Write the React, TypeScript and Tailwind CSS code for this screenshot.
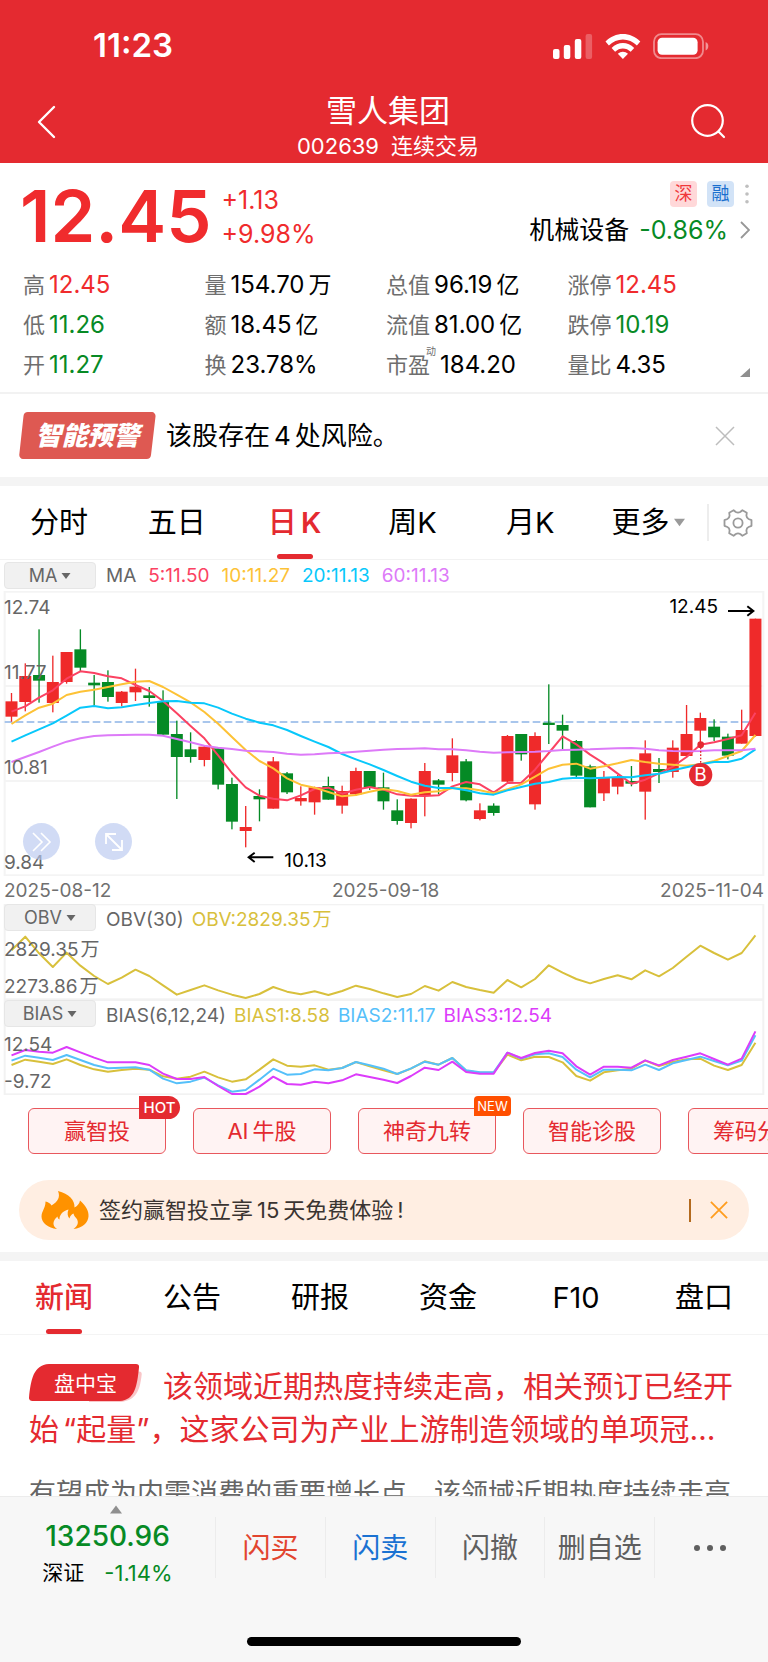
import { ReactNode } from "react";
import clsx from "clsx";

type Tone = "up" | "down" | "flat";

const toneClass: Record<Tone, string> = {
	up: "text-[#f02b2d]",
	down: "text-[#078a25]",
	flat: "text-black",
};

const stats: { label: string; value: string; unit?: string; sup?: string; tone: Tone }[] = [
	{ label: "高", value: "12.45", tone: "up" },
	{ label: "量", value: "154.70", unit: "万", tone: "flat" },
	{ label: "总值", value: "96.19", unit: "亿", tone: "flat" },
	{ label: "涨停", value: "12.45", tone: "up" },
	{ label: "低", value: "11.26", tone: "down" },
	{ label: "额", value: "18.45", unit: "亿", tone: "flat" },
	{ label: "流值", value: "81.00", unit: "亿", tone: "flat" },
	{ label: "跌停", value: "10.19", tone: "down" },
	{ label: "开", value: "11.27", tone: "down" },
	{ label: "换", value: "23.78%", tone: "flat" },
	{ label: "市盈", value: "184.20", sup: "动", tone: "flat" },
	{ label: "量比", value: "4.35", tone: "flat" },
];

// rising, high, body top, body bottom, low
const candles: [0 | 1, number, number, number, number][] = [
	[1, 336, 361, 407, 422], [1, 247, 285, 363, 391], [0, 145, 282, 299, 365], [1, 224, 303, 366, 394],
	[1, 213, 213, 303, 308], [0, 145, 205, 260, 272], [0, 282, 305, 313, 374], [0, 268, 303, 348, 362],
	[1, 330, 332, 366, 376], [1, 263, 317, 334, 360], [0, 318, 343, 351, 377], [0, 328, 361, 461, 465],
	[0, 419, 459, 528, 654], [0, 454, 505, 528, 545], [1, 492, 497, 537, 556], [0, 500, 502, 611, 625],
	[0, 590, 609, 722, 745], [1, 675, 738, 750, 799], [0, 625, 645, 655, 721], [1, 528, 541, 683, 683],
	[0, 573, 577, 634, 639], [1, 616, 651, 661, 674], [1, 617, 619, 664, 701], [0, 587, 615, 656, 656],
	[1, 614, 630, 674, 698], [1, 560, 570, 640, 645], [0, 570, 570, 619, 627], [0, 575, 619, 661, 686],
	[0, 655, 688, 720, 731], [1, 652, 653, 726, 742], [1, 546, 570, 642, 706], [0, 594, 598, 611, 640],
	[1, 472, 523, 576, 601], [0, 534, 541, 658, 661], [1, 667, 688, 714, 718], [0, 667, 674, 696, 704],
	[1, 462, 465, 602, 605], [0, 459, 459, 520, 539], [1, 454, 465, 670, 686], [0, 310, 425, 432, 489],
	[0, 401, 432, 449, 507], [0, 477, 480, 584, 588], [0, 551, 556, 679, 679], [1, 570, 590, 637, 660],
	[1, 582, 590, 617, 640], [0, 555, 600, 608, 616], [1, 478, 517, 632, 716], [0, 531, 564, 573, 606],
	[1, 478, 500, 573, 590], [1, 372, 459, 525, 527], [1, 395, 411, 449, 490], [0, 415, 437, 469, 480],
	[0, 458, 467, 524, 535], [1, 386, 447, 488, 488], [1, 113, 113, 465, 467],
];

const ma5 = [392, 376, 350, 328, 293, 271, 276, 286, 292, 312, 330, 360, 397, 435, 472, 523, 576, 619, 644, 653, 658, 643, 624, 620, 638, 626, 618, 626, 640, 644, 645, 643, 616, 603, 610, 635, 606, 605, 566, 516, 466, 490, 521, 547, 578, 608, 596, 577, 557, 528, 491, 484, 474, 463, 395];
const ma10 = [429, 403, 380, 368, 342, 332, 326, 318, 310, 302, 300, 318, 341, 364, 393, 428, 468, 507, 540, 562, 592, 611, 620, 633, 646, 642, 632, 624, 630, 641, 634, 631, 622, 622, 628, 637, 625, 610, 587, 563, 551, 548, 563, 556, 547, 537, 543, 548, 551, 554, 550, 540, 525, 510, 462];
const ma20 = [482, 463, 445, 427, 404, 380, 375, 382, 379, 372, 366, 361, 360, 365, 367, 380, 398, 413, 425, 433, 447, 465, 482, 498, 519, 535, 550, 567, 585, 602, 614, 621, 621, 628, 637, 641, 628, 618, 608, 603, 593, 590, 592, 590, 588, 589, 583, 578, 568, 559, 550, 543, 543, 533, 505];
const ma60 = [543, 528, 513, 497, 482, 472, 465, 463, 462, 461, 461, 464, 474, 484, 494, 500, 504, 509, 511, 513, 518, 521, 520, 517, 515, 512, 509, 506, 504, 503, 502, 505, 505, 508, 512, 515, 514, 513, 512, 510, 507, 506, 505, 503, 502, 501, 503, 508, 510, 511, 510, 508, 508, 508, 503];
const obv = [163, 122, 172, 213, 170, 209, 240, 264, 245, 221, 240, 268, 296, 282, 268, 283, 296, 306, 294, 273, 287, 295, 286, 297, 285, 269, 279, 292, 303, 294, 270, 284, 258, 273, 282, 290, 252, 274, 249, 208, 230, 249, 262, 249, 238, 250, 223, 241, 216, 182, 149, 171, 191, 171, 118];
const bias1 = [507, 491, 497, 504, 490, 507, 520, 527, 522, 518, 521, 541, 548, 542, 527, 544, 557, 550, 521, 490, 509, 512, 508, 521, 516, 498, 511, 523, 534, 518, 496, 506, 486, 524, 530, 530, 476, 493, 482, 483, 499, 540, 554, 529, 523, 518, 494, 510, 498, 490, 488, 509, 522, 507, 440];
const bias2 = [494, 479, 485, 492, 477, 492, 507, 517, 515, 514, 521, 548, 562, 557, 545, 568, 587, 582, 551, 518, 536, 534, 520, 523, 516, 498, 508, 518, 534, 517, 497, 506, 486, 523, 529, 529, 470, 488, 475, 472, 483, 521, 544, 521, 521, 523, 506, 522, 502, 492, 482, 495, 508, 494, 418];
const bias3 = [478, 462, 467, 470, 453, 469, 485, 499, 499, 499, 507, 533, 549, 549, 543, 570, 594, 594, 572, 542, 564, 566, 557, 562, 553, 535, 543, 551, 561, 540, 515, 522, 497, 528, 533, 533, 470, 486, 471, 464, 472, 511, 536, 512, 512, 515, 493, 508, 492, 482, 472, 489, 506, 488, 406];

const xAt = (i: number) => 34.5 + i * 41.33;

const Line = ({ data, color }: { data: number[]; color: string }) => (
	<polyline
		points={data.map((y, i) => `${xAt(i).toFixed(1)},${y}`).join(" ")}
		fill="none"
		stroke={color}
		strokeWidth="6"
		strokeLinejoin="round"
	/>
);

const Cross = ({ className }: { className: string }) => (
	<svg viewBox="0 0 20 20" className={className} fill="none" stroke="currentColor" aria-hidden="true">
		<path d="M1 1 19 19M19 1 1 19" />
	</svg>
);

const StatusBar = () => (
	<div className="flex h-[91px] items-center justify-between pr-[58px] pl-[93px]">
		<span className="text-[33px] leading-none font-semibold">11:23</span>
		<svg viewBox="0 0 157 26" className="h-[26px] w-[157px]" fill="currentColor" aria-hidden="true">
			<rect x="0" y="16" width="6.5" height="10" rx="2" />
			<rect x="10.8" y="12" width="6.5" height="14" rx="2" />
			<rect x="21.8" y="6" width="6.5" height="20" rx="2" />
			<rect x="32.6" y="1" width="6.5" height="25" rx="2" opacity="0.25" />
			<path d="M52.5 8.6c9.6-10.2 25.2-10.2 34.8 0l-3.4 3.8c-7.6-8-20.4-8-28 0z" />
			<path d="M58.6 15c6.4-6.6 16.2-6.6 22.6 0l-3.5 3.8c-4.3-4.5-11.3-4.5-15.6 0z" />
			<path d="M64.8 20.8c3-2.8 7.2-2.8 10.2 0L69.9 26z" />
			<rect x="101" y="1.2" width="49" height="24" rx="7.5" fill="none" stroke="currentColor" strokeWidth="1.8" opacity="0.45" />
			<rect x="104.6" y="4.8" width="40" height="17" rx="4.5" />
			<path d="M152.6 9c3.6 1.2 3.6 7 0 8.4z" opacity="0.5" />
		</svg>
	</div>
);

const Header = () => (
	<header className="h-[163px] shrink-0 bg-[#e42a30] text-white">
		<StatusBar />
		<div className="flex items-start justify-between pr-[42px] pl-[36px]">
			<button aria-label="返回" className="w-[50px] pt-3.5">
				<svg viewBox="0 0 20 34" className="h-[34px] w-[20px]" fill="none" stroke="currentColor" strokeWidth="2.4" strokeLinecap="round" strokeLinejoin="round">
					<path d="M18 2 3 17 18 32" />
				</svg>
			</button>
			<div className="flex flex-col items-center">
				<h1 className="text-[31px] leading-[40px]">雪人集团</h1>
				<p className="flex gap-3 text-[22px] leading-[30px]">
					<span>002639</span>
					<span>连续交易</span>
				</p>
			</div>
			<button aria-label="搜索" className="pt-3">
				<svg viewBox="0 0 36 36" className="size-[36px]" fill="none" stroke="currentColor" strokeWidth="2.2" strokeLinecap="round">
					<circle cx="17.5" cy="17.5" r="15.3" />
					<path d="M28.5 28.5 34 34" />
				</svg>
			</button>
		</div>
	</header>
);

const Quote = () => (
	<section className="border-b-2 border-[#f2f2f2] pt-4 pb-[7px]">
		<div className="flex justify-between pr-[18px] pl-[20px]">
			<div className="flex text-[#f02b2d]">
				<strong className="text-[72px] leading-[74px] font-semibold">12.45</strong>
				<div className="ml-2.5 pt-1 text-[25px] leading-[34px]">
					<p>+1.13</p>
					<p>+9.98%</p>
				</div>
			</div>
			<div className="flex flex-col items-end">
				<div className="flex items-center gap-2.5 pt-0.5">
					<span className="grid h-[26px] w-[27px] place-items-center rounded bg-[#ffd8d9] text-[18px] leading-none text-[#f0383b]">深</span>
					<span className="grid h-[26px] w-[27px] place-items-center rounded bg-[#d2e3f7] text-[18px] leading-none text-[#1a6fce]">融</span>
					<button aria-label="更多标签">
						<svg viewBox="0 0 6 20" className="h-[20px] w-[6px] fill-[#bfbfbf]">
							<circle cx="3" cy="2.3" r="1.8" />
							<circle cx="3" cy="10" r="1.8" />
							<circle cx="3" cy="17.7" r="1.8" />
						</svg>
					</button>
				</div>
				<a href="#sector" className="mt-1.5 flex items-center text-[25px] leading-[34px]">
					<span>机械设备</span>
					<span className="ml-2.5 text-[#078a25]">-0.86%</span>
					<svg viewBox="0 0 10 18" className="ml-3 h-[18px] w-[10px]" fill="none" stroke="#979797" strokeWidth="1.8">
						<path d="M1 1 9 9 1 17" />
					</svg>
				</a>
			</div>
		</div>
		<div className="relative mt-3">
			<dl className="mr-[19px] ml-[23px] grid grid-cols-4">
				{stats.map(({ label, value, unit, sup, tone }) => (
					<div key={label} className="flex items-center text-[22px] leading-[40px] whitespace-nowrap">
						<dt className="relative text-[#6e6e6e]">
							{label}
							{sup && <sup className="absolute -top-3.5 left-10 text-[10px] leading-[40px]">{sup}</sup>}
						</dt>
						<dd className={clsx("text-[24px]", sup ? "ml-2.5" : "ml-1", toneClass[tone])}>
							{value}
							{unit && <span className="ml-1 text-[23px]">{unit}</span>}
						</dd>
					</div>
				))}
			</dl>
			<svg viewBox="0 0 10 9" className="absolute right-[18px] bottom-2 h-[9px] w-[10px] fill-[#8f8f8f]">
				<path d="M0 9 10 0V9z" />
			</svg>
		</div>
	</section>
);

const RiskAlert = () => (
	<section className="flex h-[83px] items-center pr-[33px] pl-[19px]">
		<div className="relative grid h-[47px] w-[137px] place-items-center">
			<svg viewBox="0 0 137 47" className="absolute inset-0 size-full fill-[#de5952]" aria-hidden="true">
				<path d="M9 0H132a4 4 0 0 1 4.500 4.500L132 43a4.500 4.500 0 0 1-4.500 4H4.500A4 4 0 0 1 .3 42.500L4.500 4A4.500 4.500 0 0 1 9 0z" />
			</svg>
			<span className="relative text-[26px] leading-none font-black text-white italic">智能预警</span>
		</div>
		<p className="ml-[10px] flex-1 text-[26px] leading-[36px]">
			该股存在<span className="mx-1">4</span>处风险。
		</p>
		<button aria-label="关闭">
			<Cross className="size-[20px] stroke-[1.5] text-[#bdbdbd]" />
		</button>
	</section>
);

const Caret = ({ className }: { className: string }) => (
	<svg viewBox="0 0 12 8" className={className} fill="currentColor" aria-hidden="true">
		<path d="M0 0H12L6 8z" />
	</svg>
);

const TabButton = ({ active, children }: { active?: boolean; children: ReactNode }) => (
	<button
		className={clsx(
			"relative flex h-full flex-1 items-center justify-center text-[29px] whitespace-nowrap",
			active ? "font-medium text-[#e42a30]" : "text-black"
		)}
	>
		{children}
		{active && <span className="absolute bottom-0 h-[5px] w-[36px] rounded-full bg-[#e42a30]" />}
	</button>
);

const PeriodTabs = () => (
	<nav className="flex h-[74px] items-center border-b border-[#f2f2f2]">
		<TabButton>分时</TabButton>
		<TabButton>五日</TabButton>
		<TabButton active>
			日<span className="ml-1 font-semibold">K</span>
		</TabButton>
		<TabButton>周K</TabButton>
		<TabButton>月K</TabButton>
		<TabButton>
			更多
			<Caret className="ml-1 h-[9px] w-[11px] text-[#9a9a9a]" />
		</TabButton>
		<span className="h-[37px] w-[2px] bg-[#ededed]" />
		<button aria-label="设置" className="grid h-full w-[59px] place-items-center">
			<svg viewBox="0 0 30 30" className="size-[30px]" fill="none" stroke="#9a9a9a" strokeWidth="1.8" strokeLinejoin="round">
				<path d="M10.600 2.200 12.800 4Q15 5.200 17.200 4L19.400 2.200 23.800 4.700 23.400 7.700Q23.600 10 25.600 11L28.500 12.200V17.800L25.600 19Q23.600 20 23.400 22.300L23.800 25.300 19.400 27.800 17.200 26Q15 24.800 12.800 26L10.600 27.800 6.200 25.300 6.600 22.300Q6.400 20 4.400 19L1.500 17.800V12.200L4.400 11Q6.400 10 6.600 7.700L6.200 4.700z" />
				<circle cx="15" cy="15" r="4.600" />
			</svg>
		</button>
	</nav>
);

const IndicatorButton = ({ name }: { name: string }) => (
	<button className="flex h-[27px] w-[92px] shrink-0 items-center justify-center gap-1 rounded border border-[#e6e6e6] bg-[#f1f1f1] text-[18px] leading-none text-[#666]">
		{name}
		<Caret className="h-[6px] w-[10px]" />
	</button>
);

const AxisLabel = ({ children, className }: { children: ReactNode; className: string }) => (
	<span className={clsx("absolute left-1 leading-[20px] text-[#666]", className)}>{children}</span>
);

const Wan = () => <span className="ml-0.5">万</span>;

const Chart = () => (
	<section className="text-[19px] leading-none">
		<div className="flex h-[31px] items-center gap-3 pl-1">
			<IndicatorButton name="MA" />
			<span className="-ml-0.5 text-[#666]">MA</span>
			<span className="text-[#fb4262]">5:11.50</span>
			<span className="text-[#fdc236]">10:11.27</span>
			<span className="text-[#08c8fb]">20:11.13</span>
			<span className="text-[#dd7af8]">60:11.13</span>
		</div>

		<div className="relative">
			<svg viewBox="0 30 2304 855" className="block w-full" role="img" aria-label="日K线图">
				<g fill="none" stroke="#f4f4f4" strokeWidth="6">
					<rect x="14" y="32" width="2276" height="851" />
					<path d="M14 315H2290M14 600H2290" />
				</g>
				<path d="M14 423H2290" stroke="#a9c6ec" strokeWidth="6" strokeDasharray="23 10" />
				{candles.map(([rising, high, top, bottom, low], i) => (
					<g key={i} fill={rising ? "#ef2a2a" : "#058a25"}>
						<rect x={xAt(i) - 2} y={high} width="4" height={low - high} />
						<rect x={xAt(i) - 18} y={top} width="36" height={bottom - top} />
					</g>
				))}
				<Line data={ma5} color="#fb4262" />
				<Line data={ma10} color="#fdc236" />
				<Line data={ma20} color="#08c8fb" />
				<Line data={ma60} color="#dd7af8" />
				<g stroke="#000" strokeWidth="6" fill="none">
					<path d="M820 829H746M764 815 746 829 764 843" />
					<path d="M2184 90H2258M2242 76 2260 90 2242 104" />
				</g>
				<path d="M2102 500V550" stroke="#e42a30" strokeWidth="4" strokeDasharray="5 5" />
				<circle cx="2102" cy="491" r="10" fill="#e42a30" />
				<circle cx="2102" cy="581" r="35" fill="#e42a30" />
			</svg>
			<AxisLabel className="top-[7px]">12.74</AxisLabel>
			<AxisLabel className="top-[72px]">11.77</AxisLabel>
			<AxisLabel className="top-[167px]">10.81</AxisLabel>
			<AxisLabel className="top-[262px]">9.84</AxisLabel>
			<span className="absolute top-[6px] right-[50px] leading-[20px]">12.45</span>
			<span className="absolute top-[260px] left-[37%] leading-[20px]">10.13</span>
			<span className="absolute top-[174px] left-[91.2%] w-[24px] -translate-x-1/2 text-center leading-[20px] text-white">B</span>
			<button aria-label="快进" className="absolute top-[232px] left-[23px] grid size-[37px] place-items-center rounded-full bg-[#b9c8f0]/65">
				<svg viewBox="0 0 20 20" className="size-[20px]" fill="none" stroke="#fff" strokeWidth="1.6">
					<path d="M1 1 10 10 1 19M9 1 18 10 9 19" />
				</svg>
			</button>
			<button aria-label="全屏" className="absolute top-[232px] left-[95px] grid size-[37px] place-items-center rounded-full bg-[#b9c8f0]/65">
				<svg viewBox="0 0 20 20" className="size-[20px]" fill="none" stroke="#fff" strokeWidth="1.8">
					<path d="M2 12V2H12M2 2 18 18M18 8V18H8" />
				</svg>
			</button>
		</div>

		<div className="flex h-[28px] items-center justify-between px-1 text-[#707070]">
			<time>2025-08-12</time>
			<time>2025-09-18</time>
			<time>2025-11-04</time>
		</div>

		<div className="relative">
			<svg viewBox="0 24 2304 288" className="block w-full" role="img" aria-label="OBV">
				<rect x="14" y="25" width="2276" height="285" fill="none" stroke="#f2f2f2" strokeWidth="6" />
				<Line data={obv} color="#d8c03c" />
			</svg>
			<div className="absolute top-0 left-1 flex items-center gap-2 whitespace-nowrap">
				<IndicatorButton name="OBV" />
				<span className="ml-0.5 pt-1 text-[#666]">OBV(30)</span>
				<span className="pt-1 text-[#d8c03c]">
					OBV:2829.35
					<Wan />
				</span>
			</div>
			<AxisLabel className="top-[36px]">
				2829.35
				<Wan />
			</AxisLabel>
			<AxisLabel className="top-[73px]">
				2273.86
				<Wan />
			</AxisLabel>
		</div>

		<div className="relative">
			<svg viewBox="0 312 2304 286" className="block w-full" role="img" aria-label="BIAS">
				<rect x="14" y="312" width="2276" height="283" fill="none" stroke="#f2f2f2" strokeWidth="6" />
				<Line data={bias1} color="#d8c03c" />
				<Line data={bias2} color="#55c0fa" />
				<Line data={bias3} color="#dc3cfa" />
			</svg>
			<div className="absolute top-0 left-1 flex items-center gap-2 whitespace-nowrap">
				<IndicatorButton name="BIAS" />
				<span className="ml-0.5 pt-1 text-[#666]">BIAS(6,12,24)</span>
				<span className="pt-1 text-[#d8c03c]">BIAS1:8.58</span>
				<span className="pt-1 text-[#55c0fa]">BIAS2:11.17</span>
				<span className="pt-1 text-[#dc3cfa]">BIAS3:12.54</span>
			</div>
			<AxisLabel className="top-[35px]">12.54</AxisLabel>
			<AxisLabel className="top-[72px]">-9.72</AxisLabel>
		</div>
	</section>
);

const tools: { name: string; prefix?: string; badge?: "HOT" | "NEW" }[] = [
	{ name: "赢智投", badge: "HOT" },
	{ name: "牛股", prefix: "AI" },
	{ name: "神奇九转", badge: "NEW" },
	{ name: "智能诊股" },
	{ name: "筹码分布" },
];

const Tools = () => (
	<section className="flex gap-[27px] overflow-hidden pt-[13px] pl-[28px]">
		{tools.map(({ name, prefix, badge }) => (
			<button
				key={name}
				className="relative h-[46px] w-[138px] shrink-0 rounded-md border border-[#e8575d] bg-[#fff3f3] text-[22px] leading-none text-[#e42a30]"
			>
				{prefix && <span className="mr-1">{prefix}</span>}
				{name}
				{badge && (
					<span
						className={clsx(
							"absolute -top-[13px] grid place-items-center leading-none text-white",
							badge === "HOT" && "-right-[15px] h-[23px] w-[41px] rounded-l-[10px] rounded-r-full rounded-bl-none bg-[#e42a30] text-[15px] font-medium",
							badge === "NEW" && "-right-[16px] h-[20px] w-[37px] rounded rounded-bl-none bg-[#ff4f00] text-[13px]"
						)}
					>
						{badge}
					</span>
				)}
			</button>
		))}
	</section>
);

const Promo = () => (
	<section className="mx-[19px] mt-[26px] flex h-[60px] items-center rounded-full bg-[#ffeee2] pr-[21px] pl-[22px]">
		<svg viewBox="0 0 48 38" className="h-[38px] w-[48px] fill-[#ff9200]" aria-hidden="true">
			<path d="M17 0C28 3 34 9 33.500 16.500 36.500 15 38.500 12.500 39 9.500 45 15 48 20 47.500 25.500 47 32 41.500 37 32.500 38 37 35 38 31 35.500 27.500 34.500 26 33 25 32.500 22.500 30.500 23.500 29 25 28.500 27.500 26.500 25.500 26 22 27.500 18.500 21 20.500 18.500 24 18.500 28.500 17.500 28 16.500 27 16.500 25.500 11 30 11.500 35 16 38 7 37 .5 32 .5 25.500.5 20 4.500 17.500 4.500 10.500 7 11 9.500 12.500 10.500 14.500 17 10.500 19.500 6 17 0z" />
		</svg>
		<p className="ml-2.5 flex-1 text-[22px] leading-none text-[#3a3431]">
			签约赢智投立享<span className="mx-1">15</span>天免费体验<span className="ml-1">!</span>
		</p>
		<span className="h-[23px] w-[2px] bg-[#b36a1e]" />
		<button aria-label="关闭" className="ml-[19px]">
			<Cross className="size-[18px] stroke-2 text-[#ff9d1e]" />
		</button>
	</section>
);

const newsTabs = ["新闻", "公告", "研报", "资金", "F10", "盘口"];

const News = () => (
	<section>
		<nav className="flex h-[74px] border-b border-[#f4f4f4]">
			{newsTabs.map((tab, index) => (
				<TabButton key={tab} active={index === 0}>
					{tab}
				</TabButton>
			))}
		</nav>
		<article className="px-[29px] pt-[29px]">
			<h2 className="text-[30px] leading-[43px] text-[#e42a30]">
				<span className="relative mr-[21px] inline-grid h-[38px] w-[113px] place-items-center align-[6px]">
					<svg viewBox="0 0 113 38" className="absolute inset-0 size-full" aria-hidden="true">
						<path d="M110 7.500q3 0 2.700 3C111 25 108 36 92 38H60V7.500z" fill="#f9c6c8" />
						<path d="M20 0H107q3.500 0 3 3.500C108 22 106 36 91 37H3Q-.3 37 0 33.500C2 16 4 1 20 0z" fill="#e42a30" />
					</svg>
					<span className="relative text-[21px] leading-none text-white">盘中宝</span>
				</span>
				该领域近期热度持续走高，相关预订已经开始<span className="ml-1">“起量”</span>，这家公司为产业上游制造领域的单项冠…
			</h2>
			<p className="mt-[24px] text-[27px] leading-[38px] whitespace-nowrap text-[#666]">
				有望成为内需消费的重要增长点，该领域近期热度持续走高
			</p>
		</article>
	</section>
);

const actions = [
	{ name: "闪买", color: "text-[#e2452f]" },
	{ name: "闪卖", color: "text-[#1a72d2]" },
	{ name: "闪撤", color: "text-[#5f5f5f]" },
	{ name: "删自选", color: "text-[#5f5f5f]" },
];

const BottomBar = () => (
	<footer className="h-[166px] shrink-0 border-t border-[#ececec] bg-[#f7f7f7]">
		<div className="flex pt-[8px] pr-1">
			<button className="flex w-[215px] flex-col items-center">
				<svg viewBox="0 0 12 8" className="ml-4 h-[9px] w-[12px] fill-[#8f8f8f]" aria-hidden="true">
					<path d="M6 0 12 8H0z" />
				</svg>
				<span className="mt-1 text-[28px] leading-[36px] font-medium text-[#078a25]">13250.96</span>
				<span className="mt-1 flex items-center gap-5 text-[22px] leading-[30px]">
					<span className="text-[21px]">深证</span>
					<span className="text-[#078a25]">-1.14%</span>
				</span>
			</button>
			{actions.map(({ name, color }) => (
				<button
					key={name}
					className={clsx("mt-[12px] h-[61px] flex-1 border-l border-[#ececec] text-[28px] leading-none whitespace-nowrap", color)}
				>
					{name}
				</button>
			))}
			<button aria-label="更多操作" className="mt-[12px] grid h-[61px] flex-1 place-items-center border-l border-[#ececec]">
				<svg viewBox="0 0 34 8" className="h-[8px] w-[34px] fill-[#5f5f5f]">
					<circle cx="4" cy="4" r="3" />
					<circle cx="17" cy="4" r="3" />
					<circle cx="30" cy="4" r="3" />
				</svg>
			</button>
		</div>
		<div className="mx-auto mt-[49px] h-[9px] w-[274px] rounded-full bg-black" />
	</footer>
);

const App = () => {
	return (
		<div className="flex h-screen flex-col bg-white font-['Inter','Noto_Sans_CJK_SC',sans-serif] text-black">
			<Header />
			<main className="min-h-0 flex-1 overflow-hidden">
				<Quote />
				<RiskAlert />
				<div className="h-[9px] bg-[#f4f4f4]" />
				<PeriodTabs />
				<Chart />
				<Tools />
				<Promo />
				<div className="mt-[12px] h-[9px] bg-[#f4f4f4]" />
				<News />
			</main>
			<BottomBar />
		</div>
	);
};

export default App;
